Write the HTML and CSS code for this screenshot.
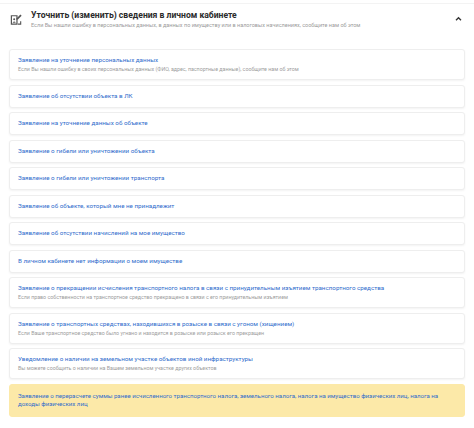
FILE: index.html
```html
<!DOCTYPE html>
<html lang="ru">
<head>
<meta charset="utf-8">
<link rel="stylesheet" href="styles.css">
</head>
<body>
<div class="page">
  <div class="head">
    <svg class="head-icon" viewBox="0 0 14 14" width="13" height="14">
      <path d="M1.5 3.5 h6 v9 h-6 z" fill="none" stroke="#555" stroke-width="1.3"/>
      <circle cx="4.5" cy="7.3" r="1.1" fill="#555"/>
      <path d="M2.8 11 q1.7 -2.4 3.4 0" fill="#555"/>
      <path d="M8.5 7.5 l4 -4 -1.3 -1.3 -4 4 -0.4 1.7 z" fill="#555"/>
      <path d="M8.5 12.5 h3 v-3" fill="none" stroke="#555" stroke-width="1.2"/>
    </svg>
    <div class="head-text">
      <div class="head-title">Уточнить (изменить) сведения в личном кабинете</div>
      <div class="head-sub">Если Вы нашли ошибку в персональных данных, в данных по имуществу или в налоговых начислениях, сообщите нам об этом</div>
    </div>
    <svg class="chev" viewBox="0 0 8 6" width="7" height="5">
      <path d="M1 5 L4 2 L7 5" fill="none" stroke="#333" stroke-width="1.6"/>
    </svg>
  </div>
  <div class="list">
    <div class="card">
      <div class="ct">Заявление на уточнение персональных данных</div>
      <div class="cd">Если Вы нашли ошибку в своих персональных данных (ФИО, адрес, паспортные данные), сообщите нам об этом</div>
    </div>
    <div class="card"><div class="ct">Заявление об отсутствии объекта в ЛК</div></div>
    <div class="card"><div class="ct">Заявление на уточнение данных об объекте</div></div>
    <div class="card"><div class="ct">Заявление о гибели или уничтожении объекта</div></div>
    <div class="card"><div class="ct">Заявление о гибели или уничтожении транспорта</div></div>
    <div class="card"><div class="ct">Заявление об объекте, который мне не принадлежит</div></div>
    <div class="card"><div class="ct">Заявление об отсутствии начислений на мое имущество</div></div>
    <div class="card"><div class="ct">В личном кабинете нет информации о моем имуществе</div></div>
    <div class="card">
      <div class="ct">Заявление о прекращении исчисления транспортного налога в связи с принудительным изъятием транспортного средства</div>
      <div class="cd">Если право собственности на транспортное средство прекращено в связи с его принудительным изъятием</div>
    </div>
    <div class="card">
      <div class="ct">Заявление о транспортных средствах, находившихся в розыске в связи с угоном (хищением)</div>
      <div class="cd">Если Ваше транспортное средство было угнано и находится в розыске или розыск его прекращен</div>
    </div>
    <div class="card">
      <div class="ct">Уведомление о наличии на земельном участке объектов иной инфраструктуры</div>
      <div class="cd">Вы можете сообщить о наличии на Вашем земельном участке других объектов</div>
    </div>
    <div class="card yellow">
      <div class="ct">Заявление о перерасчете суммы ранее исчисленного транспортного налога, земельного налога, налога на имущество физических лиц, налога на доходы физических лиц</div>
    </div>
  </div>
</div>
</body>
</html>
```

FILE: styles.css
```css
html, body {
  margin: 0;
  padding: 0;
  background: #fff;
}
body {
  font-family: Roboto, "Liberation Sans", Arial, sans-serif;
}
.page {
  width: 474px;
}
.head {
  display: flex;
  align-items: flex-start;
  padding: 6px 12px 0 10px;
  height: 42px;
  border-top: 1px solid #f3f3f3;
  margin-top: 3px;
  box-sizing: border-box;
  margin-bottom: 4px;
}
.head-icon {
  margin-top: 2px;
  margin-right: 8px;
  flex: none;
}
.head-text {
  flex: 1;
}
.head-title {
  font-size: 8.6px;
  font-weight: 700;
  color: #2b2b2b;
  line-height: 10px;
  margin-bottom: 1px;
}
.head-sub {
  font-size: 5.5px;
  color: #9b9b9b;
  line-height: 8px;
}
.chev {
  margin-top: 6px;
  flex: none;
}
.list {
  display: flex;
  flex-direction: column;
  gap: 4.5px;
  margin-left: 9px;
  width: 456px;
}
.card {
  border: 1px solid #eeeeee;
  border-radius: 3px;
  box-shadow: 0 1px 2px rgba(0,0,0,0.05);
  padding: 6px 8px;
  background: #fff;
}
.ct {
  font-size: 6.25px;
  line-height: 9px;
  color: #2f6ccc;
}
.cd {
  font-size: 5.3px;
  line-height: 8px;
  color: #9d9d9d;
}
.yellow {
  background: #fce9a8;
  border-color: #fce9a8;
  box-shadow: none;
  padding: 7px 8px 8px;
}
.yellow .ct {
  font-size: 6.1px;
  line-height: 8px;
}
```
